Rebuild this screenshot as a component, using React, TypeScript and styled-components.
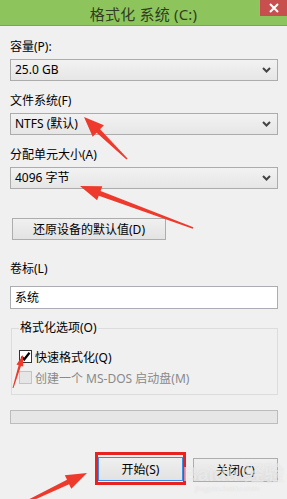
import React from 'react';
import styled, { createGlobalStyle } from 'styled-components';

const GlobalStyle = createGlobalStyle`
  html, body {
    margin: 0;
    padding: 0;
    background: #f0f0f0;
  }
`;

const FONT = `"Noto Sans", "Noto Sans CJK SC", sans-serif`;

type Pt = [number, number];

// tapered annotation arrow, from tail (thin) to tip (head)
const arrowPoints = (
  tip: Pt,
  tail: Pt,
  headLen: number,
  headW: number,
  neckW: number,
  tailW: number
) => {
  const dx = tip[0] - tail[0];
  const dy = tip[1] - tail[1];
  const len = Math.hypot(dx, dy);
  const ux = dx / len;
  const uy = dy / len;
  const nx = -uy;
  const ny = ux;
  const neck: Pt = [tip[0] - ux * headLen, tip[1] - uy * headLen];
  const p = (b: Pt, w: number): string =>
    `${(b[0] + nx * w).toFixed(1)},${(b[1] + ny * w).toFixed(1)}`;
  return [
    p(tail, tailW / 2),
    p(neck, neckW / 2),
    p(neck, headW / 2),
    `${tip[0]},${tip[1]}`,
    p(neck, -headW / 2),
    p(neck, -neckW / 2),
    p(tail, -tailW / 2)
  ].join(' ');
};

const ARROWS = [
  { tip: [84, 117] as Pt, tail: [127, 159] as Pt, head: 20, headW: 16, neck: 5, tailW: 1.5 },
  { tip: [80, 186] as Pt, tail: [193, 228] as Pt, head: 21, headW: 15, neck: 5, tailW: 1.5 },
  { tip: [23, 355] as Pt, tail: [13, 388] as Pt, head: 11, headW: 7, neck: 2.5, tailW: 1 },
  { tip: [87, 473] as Pt, tail: [18, 506] as Pt, head: 21, headW: 15, neck: 5, tailW: 2 }
];

const Chevron = () => (
  <svg width="9" height="6" viewBox="0 0 9 6">
    <polyline
      points="1,1 4.5,4.5 8,1"
      fill="none"
      stroke="#444"
      strokeWidth="2"
    />
  </svg>
);

const Select: React.FC<{ value: string }> = ({ value }) => (
  <SelectBox>
    <span>{value}</span>
    <Chevron />
  </SelectBox>
);

const App: React.FC = () => {
  return (
    <>
      <GlobalStyle />
      <Window>
        <TitleBar>
          <Title>格式化 系统 (C:)</Title>
          <CloseButton>
            <svg width="10" height="10" viewBox="0 0 10 10">
              <path d="M1 1 L9 9 M9 1 L1 9" stroke="#fff" strokeWidth="2" />
            </svg>
          </CloseButton>
        </TitleBar>

        <Content>
          <Field>
            <Label>容量(P):</Label>
            <Select value="25.0 GB" />
          </Field>
          <Field>
            <Label>文件系统(F)</Label>
            <Select value="NTFS (默认)" />
          </Field>
          <Field>
            <Label>分配单元大小(A)</Label>
            <Select value="4096 字节" />
          </Field>

          <RestoreButton>还原设备的默认值(D)</RestoreButton>

          <VolumeLabel>卷标(L)</VolumeLabel>
          <TextInput>系统</TextInput>

          <Group>
            <legend>格式化选项(O)</legend>
            <CheckRow>
              <CheckBox checked>
                <svg width="11" height="11" viewBox="0 0 11 11">
                  <polyline
                    points="1.5,5.5 4.2,8.5 9.5,1.8"
                    fill="none"
                    stroke="#000"
                    strokeWidth="2.2"
                  />
                </svg>
              </CheckBox>
              快速格式化(Q)
            </CheckRow>
            <CheckRow disabled>
              <CheckBox disabled />
              创建一个 MS-DOS 启动盘(M)
            </CheckRow>
          </Group>

          <Progress />

          <Actions>
            <Highlight>
              <DialogButton primary>开始(S)</DialogButton>
            </Highlight>
            <DialogButton>关闭(C)</DialogButton>
          </Actions>
        </Content>

        <Watermark>
          Baidu 经验
          <small>jingyan.baidu.com</small>
        </Watermark>

        <Annotations width="287" height="499" viewBox="0 0 287 499">
          {ARROWS.map((a, i) => (
            <polygon
              key={i}
              points={arrowPoints(a.tip, a.tail, a.head, a.headW, a.neck, a.tailW)}
              fill="#ee3a2c"
            />
          ))}
        </Annotations>
      </Window>
    </>
  );
};

export default App;

const Window = styled.div`
  position: relative;
  width: 287px;
  height: 499px;
  overflow: hidden;
  background: #f0f0f0;
  font-family: ${FONT};
  font-size: 12px;
  color: #000;
`;

const TitleBar = styled.div`
  position: relative;
  height: 25px;
  background: #8dc55c;
  border-bottom: 1px solid #72ad40;
  display: flex;
  align-items: center;
  justify-content: center;
`;

const Title = styled.div`
  font-size: 15px;
  color: #2f3d22;
  letter-spacing: 0.2px;
  margin-top: 2px;
`;

const CloseButton = styled.div`
  position: absolute;
  top: 0;
  right: 0;
  width: 27px;
  height: 16px;
  background: #c7504f;
  display: flex;
  align-items: center;
  justify-content: center;
`;

const Content = styled.div`
  padding: 13px 9px 0 10px;
  display: flex;
  flex-direction: column;
  align-items: stretch;
`;

const Field = styled.div`
  display: flex;
  flex-direction: column;
  & + & {
    margin-top: 12px;
  }
`;

const Label = styled.div`
  line-height: 16px;
  height: 16px;
  margin-bottom: 4px;
`;

const SelectBox = styled.div`
  box-sizing: border-box;
  height: 22px;
  border: 1px solid #acacac;
  background: linear-gradient(#f2f2f2, #e6e6e6);
  display: flex;
  align-items: center;
  justify-content: space-between;
  padding: 0 6px 0 4px;
  line-height: 20px;
`;

const RestoreButton = styled.div`
  box-sizing: border-box;
  margin: 29px 0 0 2px;
  width: 154px;
  height: 22px;
  border: 1px solid #adadad;
  background: linear-gradient(#f0f0f0, #e3e3e3);
  display: flex;
  align-items: center;
  justify-content: center;
`;

const VolumeLabel = styled(Label)`
  margin-top: 21px;
  margin-bottom: 9px;
`;

const TextInput = styled.div`
  box-sizing: border-box;
  height: 23px;
  border: 1px solid #abadb3;
  background: #fff;
  padding: 0 4px;
  line-height: 21px;
`;

const Group = styled.fieldset`
  margin: 11px 0 0 1px;
  padding: 10px 7px 6px 7px;
  border: 1px solid #dcdcdc;
  min-width: 0;

  legend {
    padding: 0 1px;
    line-height: 16px;
  }
`;

const CheckRow = styled.div<{ disabled?: boolean }>`
  display: flex;
  align-items: center;
  gap: 3px;
  height: 21px;
  color: ${({ disabled }) => (disabled ? '#8a8a8a' : '#000')};
`;

const CheckBox = styled.span<{ checked?: boolean; disabled?: boolean }>`
  box-sizing: border-box;
  width: 13px;
  height: 13px;
  border: 1px solid ${({ disabled }) => (disabled ? '#c4c4c4' : '#333')};
  background: ${({ disabled }) => (disabled ? '#e6e6e6' : '#fff')};
  display: flex;
  align-items: center;
  justify-content: center;
`;

const Progress = styled.div`
  box-sizing: border-box;
  margin-top: 15px;
  height: 14px;
  border: 1px solid #bcbcbc;
  background: #e6e6e6;
`;

const Actions = styled.div`
  margin-top: 28px;
  display: flex;
  justify-content: flex-end;
  align-items: flex-start;
  gap: 7px;

  & > div:last-child {
    margin-top: 6px;
  }
`;

const Highlight = styled.div`
  border: 3px solid #e8231f;
  padding: 2px 0 1px;
`;

const DialogButton = styled.div<{ primary?: boolean }>`
  box-sizing: border-box;
  width: 85px;
  height: 24px;
  border: 1px solid ${({ primary }) => (primary ? '#3a8ee6' : '#adadad')};
  background: linear-gradient(#efefef, #e2e2e2);
  display: flex;
  align-items: center;
  justify-content: center;
`;

const Watermark = styled.div`
  position: absolute;
  left: 183px;
  top: 464px;
  font-family: "Liberation Sans", "Noto Sans CJK SC", sans-serif;
  font-size: 20px;
  font-weight: 700;
  color: rgba(255, 255, 255, 0.5);
  text-shadow: 0 0 1px rgba(160, 160, 160, 0.3);
  pointer-events: none;
  line-height: 20px;
  white-space: nowrap;

  small {
    display: block;
    font-size: 8px;
    font-weight: 400;
    line-height: 10px;
    margin-left: 12px;
  }
`;

const Annotations = styled.svg`
  position: absolute;
  left: 0;
  top: 0;
  pointer-events: none;
`;
